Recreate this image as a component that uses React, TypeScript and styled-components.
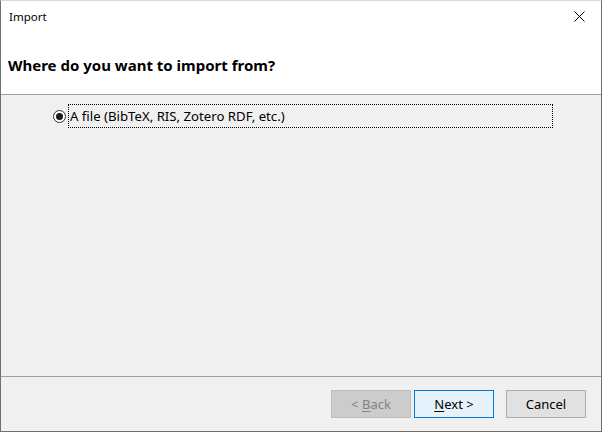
import React from "react";
import styled, { createGlobalStyle } from "styled-components";

const Global = createGlobalStyle`
  html, body { margin: 0; padding: 0; background: #ffffff; }
  * { box-sizing: border-box; }
`;

const Window = styled.div`
  width: 602px;
  height: 432px;
  display: flex;
  flex-direction: column;
  border: 1px solid #707070;
  border-top-color: #d9d9d9;
  font-family: "Noto Sans", "Liberation Sans", sans-serif;
  font-size: 12px;
  color: #000;
  background: #f0f0f0;
`;

const Header = styled.div`
  height: 94px;
  background: #ffffff;
  border-bottom: 1px solid #a0a0a0;
  display: flex;
  flex-direction: column;
`;

const TitleBar = styled.div`
  height: 31px;
  display: flex;
  align-items: center;
  justify-content: space-between;
  padding: 0 8px 0 8px;
`;

const Title = styled.span`
  font-size: 11.5px;
  margin-top: -1px;
`;

const Close = styled.div`
  width: 30px;
  height: 30px;
  display: flex;
  align-items: center;
  justify-content: center;
  margin-right: -1px;
`;

const Heading = styled.h1`
  margin: 0;
  padding: 23px 0 0 7px;
  font-size: 15px;
  font-weight: 700;
  line-height: 20px;
`;

const Body = styled.div`
  flex: 1;
  padding: 9px 0 0 52px;
`;

const RadioRow = styled.label`
  display: flex;
  align-items: center;
  gap: 2px;
`;

const RadioCircle = styled.span`
  width: 13px;
  height: 13px;
  border-radius: 50%;
  border: 1px solid #333;
  background: #fff;
  display: flex;
  align-items: center;
  justify-content: center;
  &::after {
    content: "";
    width: 7px;
    height: 7px;
    border-radius: 50%;
    background: #1a1a1a;
  }
`;

const FocusLabel = styled.span`
  width: 485px;
  height: 24px;
  border: 1px dotted #000;
  display: flex;
  align-items: center;
  padding-left: 1px;
  line-height: 16px;
  font-size: 13.2px;
`;

const Footer = styled.div`
  height: 55px;
  border-top: 1px solid #a0a0a0;
  display: flex;
  align-items: flex-start;
  justify-content: flex-end;
  padding: 13px 15px 0 0;
`;

const Button = styled.button<{ $variant?: "disabled" | "default" | "normal"; $gap?: number }>`
  width: 80px;
  height: 28px;
  margin-left: ${(p) => p.$gap ?? 0}px;
  font-family: inherit;
  font-size: 13px;
  padding: 0;
  border: 1px solid
    ${(p) => (p.$variant === "disabled" ? "#bfbfbf" : p.$variant === "default" ? "#0078d7" : "#adadad")};
  background: ${(p) => (p.$variant === "disabled" ? "#cccccc" : p.$variant === "default" ? "#e5f1fb" : "#e1e1e1")};
  color: ${(p) => (p.$variant === "disabled" ? "#838383" : "#000")};
  u { text-underline-offset: 2px; }
`;

export default function App() {
  return (
    <>
      <Global />
      <Window>
        <Header>
          <TitleBar>
            <Title>Import</Title>
            <Close>
              <svg width="11" height="11" viewBox="0 0 11 11">
                <path d="M0.5 0.5 L10.5 10.5 M10.5 0.5 L0.5 10.5" stroke="#000" strokeWidth="1" />
              </svg>
            </Close>
          </TitleBar>
          <Heading>Where do you want to import from?</Heading>
        </Header>
        <Body>
          <RadioRow>
            <RadioCircle />
            <FocusLabel>A file (BibTeX, RIS, Zotero RDF, etc.)</FocusLabel>
          </RadioRow>
        </Body>
        <Footer>
          <Button $variant="disabled" disabled>
            &lt; <u>B</u>ack
          </Button>
          <Button $variant="default" $gap={3}>
            <u>N</u>ext &gt;
          </Button>
          <Button $variant="normal" $gap={12}>
            Cancel
          </Button>
        </Footer>
      </Window>
    </>
  );
}
